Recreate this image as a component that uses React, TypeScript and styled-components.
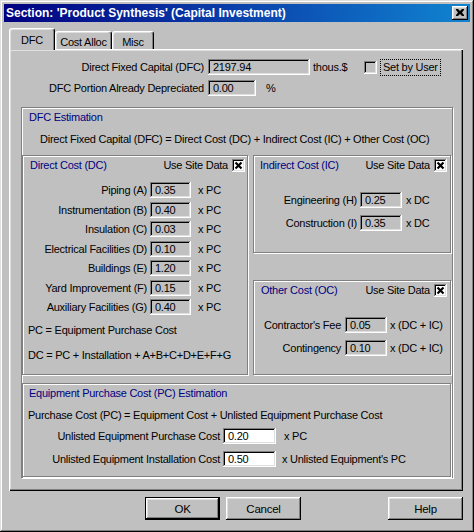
import React from 'react';
import styled, { createGlobalStyle, css } from 'styled-components';

const GlobalStyle = createGlobalStyle`
  html, body {
    margin: 0;
    padding: 0;
    background: #c0c0c0;
  }
  body {
    font-family: 'Liberation Sans', Arial, sans-serif;
    font-size: 11px;
    letter-spacing: -0.25px;
    color: #000;
  }
  * {
    box-sizing: border-box;
  }
`;

const raised = css`
  box-shadow: inset -1px -1px #000, inset 1px 1px #fff, inset -2px -2px #808080, inset 2px 2px #dfdfdf;
`;

const sunken = css`
  box-shadow: inset -1px -1px #fff, inset 1px 1px #808080, inset -2px -2px #dfdfdf, inset 2px 2px #000;
`;

const etched = css`
  border: 1px solid #808080;
  box-shadow: inset 1px 1px #fff, 1px 1px #fff;
`;

const App = () => (
  <>
    <GlobalStyle />
    <Window>
      <TitleBar>
        <TitleText>Section: 'Product Synthesis' (Capital Investment)</TitleText>
        <CloseButton>
          <svg width="8" height="7" viewBox="0 0 8 7">
            <path d="M0 0h2l2 2 2-2h2v1L6 3.5 8 6v1H6L4 5 2 7H0V6l2-2.5L0 1z" fill="#000" />
          </svg>
        </CloseButton>
      </TitleBar>

      <TabStrip>
        <Tab $active $w={46}>DFC</Tab>
        <Tab $w={57}>Cost Alloc</Tab>
        <Tab $w={42}>Misc</Tab>
      </TabStrip>

      <Panel>
        <TopRow>
          <Label $w={183}>Direct Fixed Capital (DFC)</Label>
          <Field $w={102}>2197.94</Field>
          <Suffix $gap={3} $w={51}>thous.$</Suffix>
          <CheckBox />
          <FocusLabel>Set by User</FocusLabel>
        </TopRow>
        <TopRow>
          <Label $w={183}>DFC Portion Already Depreciated</Label>
          <Field $w={48}>0.00</Field>
          <Suffix $gap={10}>%</Suffix>
        </TopRow>

        <OuterGroup>
          <EstimationHeader>
            <GroupTitle>DFC Estimation</GroupTitle>
            <Formula>Direct Fixed Capital (DFC) = Direct Cost (DC) + Indirect Cost (IC) + Other Cost (OC)</Formula>
          </EstimationHeader>

          <Middle>
            <SubGroup $w={226} $h={220}>
              <SubHeader $left={7} $right={2}>
                <GroupTitle>Direct Cost (DC)</GroupTitle>
                <SiteData>
                  Use Site Data
                  <CheckBox $checked />
                </SiteData>
              </SubHeader>
              <Rows $top={8} $gap={3.5}>
                {[
                  ['Piping (A)', '0.35'],
                  ['Instrumentation (B)', '0.40'],
                  ['Insulation (C)', '0.03'],
                  ['Electrical Facilities (D)', '0.10'],
                  ['Buildings (E)', '1.20'],
                  ['Yard Improvement (F)', '0.15'],
                  ['Auxiliary Facilities (G)', '0.40'],
                ].map(([label, value]) => (
                  <FieldRow key={label}>
                    <Label $w={124} $gap={3}>{label}</Label>
                    <Field $w={41}>{value}</Field>
                    <Suffix $gap={7}>x PC</Suffix>
                  </FieldRow>
                ))}
              </Rows>
              <Note $top={8}>PC = Equipment Purchase Cost</Note>
              <Note $top={11}>DC = PC + Installation + A+B+C+D+E+F+G</Note>
            </SubGroup>

            <RightColumn>
              <SubGroup $w={198} $h={98}>
                <SubHeader $left={6} $right={3}>
                  <GroupTitle>Indirect Cost (IC)</GroupTitle>
                  <SiteData>
                    Use Site Data
                    <CheckBox $checked />
                  </SiteData>
                </SubHeader>
                <Rows $top={18} $gap={7}>
                  <FieldRow>
                    <Label $w={103} $gap={3}>Engineering (H)</Label>
                    <Field $w={42}>0.25</Field>
                    <Suffix $gap={4}>x DC</Suffix>
                  </FieldRow>
                  <FieldRow>
                    <Label $w={103} $gap={3}>Construction (I)</Label>
                    <Field $w={42}>0.35</Field>
                    <Suffix $gap={4}>x DC</Suffix>
                  </FieldRow>
                </Rows>
              </SubGroup>

              <SubGroup $w={198} $h={95}>
                <SubHeader $left={7} $right={3}>
                  <GroupTitle>Other Cost (OC)</GroupTitle>
                  <SiteData>
                    Use Site Data
                    <CheckBox $checked />
                  </SiteData>
                </SubHeader>
                <Rows $top={18} $gap={7}>
                  <FieldRow>
                    <Label $w={87} $gap={4}>Contractor's Fee</Label>
                    <Field $w={42}>0.05</Field>
                    <Suffix $gap={3}>x (DC + IC)</Suffix>
                  </FieldRow>
                  <FieldRow>
                    <Label $w={87} $gap={4}>Contingency</Label>
                    <Field $w={42}>0.10</Field>
                    <Suffix $gap={3}>x (DC + IC)</Suffix>
                  </FieldRow>
                </Rows>
              </SubGroup>
            </RightColumn>
          </Middle>

          <EquipGroup>
            <SubHeader $left={6} $right={3}>
              <GroupTitle>Equipment Purchase Cost (PC) Estimation</GroupTitle>
            </SubHeader>
            <Note $top={6}>Purchase Cost (PC) = Equipment Cost + Unlisted Equipment Purchase Cost</Note>
            <Rows $top={6} $gap={7}>
              <FieldRow>
                <Label $w={197} $gap={3}>Unlisted Equipment Purchase Cost</Label>
                <Field $w={53} $white>0.20</Field>
                <Suffix $gap={8}>x PC</Suffix>
              </FieldRow>
              <FieldRow>
                <Label $w={197} $gap={3}>Unlisted Equipment Installation Cost</Label>
                <Field $w={53} $white>0.50</Field>
                <Suffix $gap={6}>x Unlisted Equipment's PC</Suffix>
              </FieldRow>
            </Rows>
          </EquipGroup>
        </OuterGroup>
      </Panel>

      <ButtonRow>
        <Button $default>OK</Button>
        <Button $gap={6}>Cancel</Button>
        <Button $gap={87}>Help</Button>
      </ButtonRow>
    </Window>
  </>
);

export default App;

const Window = styled.div`
  width: 474px;
  height: 532px;
  padding: 4px;
  background: #c0c0c0;
  box-shadow: inset -1px -1px #000, inset 1px 1px #dfdfdf, inset -2px -2px #808080, inset 2px 2px #fff;
  display: flex;
  flex-direction: column;
`;

const TitleBar = styled.div`
  height: 18px;
  padding: 0 2px 0 2px;
  background: linear-gradient(90deg, #000080 0%, #0a3aa8 45%, #1084d0 100%);
  display: flex;
  align-items: center;
  justify-content: space-between;
`;

const TitleText = styled.span`
  color: #fff;
  font-weight: 700;
  font-size: 12px;
  letter-spacing: 0;
  white-space: nowrap;
`;

const CloseButton = styled.span`
  width: 16px;
  height: 14px;
  background: #c0c0c0;
  ${raised};
  display: flex;
  align-items: center;
  justify-content: center;
  padding-bottom: 1px;
`;

const TabStrip = styled.div`
  margin: 6px 0 0 5px;
  height: 21px;
  display: flex;
  align-items: flex-end;
`;

const Tab = styled.div<{ $active?: boolean; $w: number }>`
  position: relative;
  z-index: ${({ $active }) => ($active ? 1 : 0)};
  width: ${({ $w }) => $w}px;
  height: ${({ $active }) => ($active ? 22 : 18)}px;
  margin-bottom: ${({ $active }) => ($active ? -1 : 0)}px;
  padding-top: ${({ $active }) => ($active ? 1 : 2)}px;
  background: #c0c0c0;
  border-top: 1px solid #fff;
  border-left: 1px solid #fff;
  border-right: 1px solid #000;
  border-radius: 3px 3px 0 0;
  box-shadow: inset -1px 0 #808080, inset 1px 1px #dfdfdf;
  display: flex;
  align-items: center;
  justify-content: center;
  white-space: nowrap;
`;

const Panel = styled.div`
  width: 454px;
  height: 442px;
  margin-left: 5px;
  padding: 10px 0 0 12px;
  box-shadow: inset 1px 1px #fff, inset -1px -1px #000, inset -2px -2px #808080, inset 2px 2px #dfdfdf;
  display: flex;
  flex-direction: column;
`;

const TopRow = styled.div`
  height: 16px;
  margin-bottom: 5px;
  display: flex;
  align-items: center;
`;

const FieldRow = styled.div`
  height: 16px;
  display: flex;
  align-items: center;
`;

const Label = styled.span<{ $w: number; $gap?: number }>`
  width: ${({ $w }) => $w}px;
  margin-right: ${({ $gap }) => $gap ?? 4}px;
  text-align: right;
  white-space: nowrap;
`;

const Field = styled.span<{ $w: number; $white?: boolean }>`
  width: ${({ $w }) => $w}px;
  height: 16px;
  padding: 2px 0 0 5px;
  background: ${({ $white }) => ($white ? '#fff' : '#c0c0c0')};
  ${sunken};
  line-height: 13px;
  white-space: nowrap;
`;

const Suffix = styled.span<{ $gap: number; $w?: number }>`
  margin-left: ${({ $gap }) => $gap}px;
  ${({ $w }) => ($w ? `width: ${$w}px;` : '')}
  white-space: nowrap;
`;

const CheckBox = styled.span<{ $checked?: boolean }>`
  width: 13px;
  height: 13px;
  flex: none;
  background: ${({ $checked }) => ($checked ? '#fff' : '#c0c0c0')};
  ${sunken};
  display: inline-flex;
  align-items: center;
  justify-content: center;

  &::after {
    content: '';
    display: ${({ $checked }) => ($checked ? 'block' : 'none')};
    width: 9px;
    height: 9px;
    background: no-repeat center / 9px 9px
      url("data:image/svg+xml,%3Csvg xmlns='http://www.w3.org/2000/svg' viewBox='0 0 9 9'%3E%3Cpath d='M1.5 1.5L7.5 7.5M7.5 1.5L1.5 7.5' stroke='%23000' stroke-width='2.2'/%3E%3C/svg%3E");
  }
`;

const FocusLabel = styled.span`
  margin-left: 3px;
  height: 17px;
  padding: 0 2px;
  border: 1px dotted #000;
  display: flex;
  align-items: center;
  white-space: nowrap;
`;

const OuterGroup = styled.div`
  margin-top: 6px;
  width: 432px;
  height: 371px;
  ${etched};
  display: flex;
  flex-direction: column;
`;

const EstimationHeader = styled.div`
  height: 47px;
  padding: 2px 0 0 7px;
`;

const GroupTitle = styled.div`
  color: #000080;
  line-height: 14px;
  white-space: nowrap;
`;

const Formula = styled.div`
  margin-top: 8px;
  padding-left: 11px;
  line-height: 14px;
  white-space: nowrap;
`;

const Middle = styled.div`
  height: 220px;
  display: flex;
  gap: 5px;
`;

const RightColumn = styled.div`
  display: flex;
  flex-direction: column;
  gap: 27px;
`;

const SubGroup = styled.div<{ $w: number; $h: number }>`
  width: ${({ $w }) => $w}px;
  height: ${({ $h }) => $h}px;
  ${etched};
  display: flex;
  flex-direction: column;
`;

const EquipGroup = styled.div`
  margin-top: 8px;
  width: 429px;
  height: 94px;
  ${etched};
  display: flex;
  flex-direction: column;
`;

const SubHeader = styled.div<{ $left: number; $right: number }>`
  height: 18px;
  padding: 0 ${({ $right }) => $right}px 0 ${({ $left }) => $left}px;
  display: flex;
  align-items: center;
  justify-content: space-between;
`;

const SiteData = styled.span`
  display: flex;
  align-items: center;
  gap: 4px;
  white-space: nowrap;
`;

const Rows = styled.div<{ $top: number; $gap: number }>`
  margin-top: ${({ $top }) => $top}px;
  display: flex;
  flex-direction: column;
  gap: ${({ $gap }) => $gap}px;
`;

const Note = styled.div<{ $top: number }>`
  margin-top: ${({ $top }) => $top}px;
  padding-left: 5px;
  line-height: 14px;
  white-space: nowrap;
`;

const ButtonRow = styled.div`
  margin-top: 6px;
  padding-left: 141px;
  display: flex;
`;

const Button = styled.div<{ $default?: boolean; $gap?: number }>`
  width: 75px;
  height: 23px;
  margin-left: ${({ $gap }) => $gap ?? 0}px;
  background: #c0c0c0;
  ${({ $default }) =>
    $default
      ? css`
          border: 1px solid #000;
        `
      : ''}
  ${raised};
  display: flex;
  align-items: center;
  justify-content: center;
  font-size: 11.5px;
`;
